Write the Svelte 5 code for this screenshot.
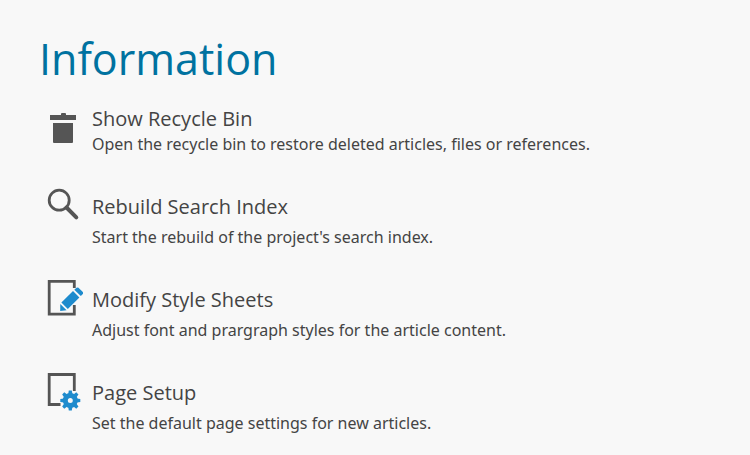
<script>
  const actions = [
    {
      icon: 'bin',
      title: 'Show Recycle Bin',
      description: 'Open the recycle bin to restore deleted articles, files or references.',
      compact: true
    },
    {
      icon: 'search',
      title: 'Rebuild Search Index',
      description: "Start the rebuild of the project's search index."
    },
    {
      icon: 'edit',
      title: 'Modify Style Sheets',
      description: 'Adjust font and prargraph styles for the article content.'
    },
    {
      icon: 'setup',
      title: 'Page Setup',
      description: 'Set the default page settings for new articles.'
    }
  ];

  const teeth = [0, 45, 90, 135, 180, 225, 270, 315];
</script>

<main>
  <h1>Information</h1>
  <div class="actions">
    {#each actions as action}
      <button type="button" class="action" class:compact={action.compact}>
        <svg class="icon" viewBox="0 0 36 48" aria-hidden="true">
          {#if action.icon === 'bin'}
            <path class="solid" d="M3 18H14V17q0-1 1-1h3q1 0 1 1v1H29V23H3z" />
            <path class="solid" d="M6 26H26V45q0 1-1 1H7q-1 0-1-1z" />
          {:else if action.icon === 'search'}
            <circle class="line" cx="12.2" cy="15.2" r="10" />
            <path class="handle" d="M19.5 22.5L29.3 32.3" />
          {:else if action.icon === 'edit'}
            <path class="line" d="M27.3 10V3.3H2.2V36.2H27.3V27" />
            <path class="accent" d="M27.3 11.7L29.5 9.8q1-.8 2 0L35.8 14q.8 1 0 2L33.8 18z" />
            <path class="accent" d="M26 13L32.4 19.4L20.8 31L14.4 24.6z" />
            <path class="accent" d="M13.3 26L19.6 32.3L13.2 33z" />
          {:else}
            <path class="line" d="M27.3 20V3.5H2.2V33.5H13.5" />
            <g transform="translate(23.3 29.5)">
              <circle class="ring" r="5" />
              {#each teeth as angle}
                <path class="accent" d="M-2.1-6.5L-1.5-10H1.5L2.1-6.5z" transform="rotate({angle})" />
              {/each}
            </g>
          {/if}
        </svg>
        <span class="text">
          <span class="title">{action.title}</span>
          <span class="description">{action.description}</span>
        </span>
      </button>
    {/each}
  </div>
</main>

<style>
  :global(body) {
    margin: 0;
    background: #f8f8f8;
  }

  main {
    padding: 25px 40px 12px 39px;
    font-family: "Segoe UI", "Open Sans", sans-serif;
    color: #444;
  }

  h1 {
    margin: 0 0 4px;
    font-size: 43px;
    line-height: 68px;
    font-weight: 400;
    color: #0072a0;
  }

  .actions {
    display: flex;
    flex-direction: column;
    gap: 29px;
  }

  .action {
    display: flex;
    align-items: flex-start;
    gap: 9px;
    padding: 0 0 0 8px;
    border: none;
    background: none;
    font: inherit;
    color: inherit;
    text-align: left;
    cursor: pointer;
  }

  .action:hover .title {
    color: #0072a0;
  }

  .icon {
    flex: none;
    width: 36px;
    height: 48px;
  }

  .text {
    display: flex;
    flex-direction: column;
    gap: 5px;
    padding-top: 9px;
  }

  .compact .text {
    gap: 0;
  }

  .title {
    font-size: 20px;
    line-height: 26px;
  }

  .description {
    font-family: "Segoe UI", "Noto Sans", sans-serif;
    font-size: 16px;
    line-height: 24px;
  }

  .solid {
    fill: #555;
  }

  .line {
    fill: none;
    stroke: #555;
    stroke-width: 2.8;
  }

  .handle {
    stroke: #555;
    stroke-width: 4;
    stroke-linecap: round;
  }

  .accent {
    fill: #1e8bcd;
  }

  .ring {
    fill: none;
    stroke: #1e8bcd;
    stroke-width: 5;
  }
</style>
